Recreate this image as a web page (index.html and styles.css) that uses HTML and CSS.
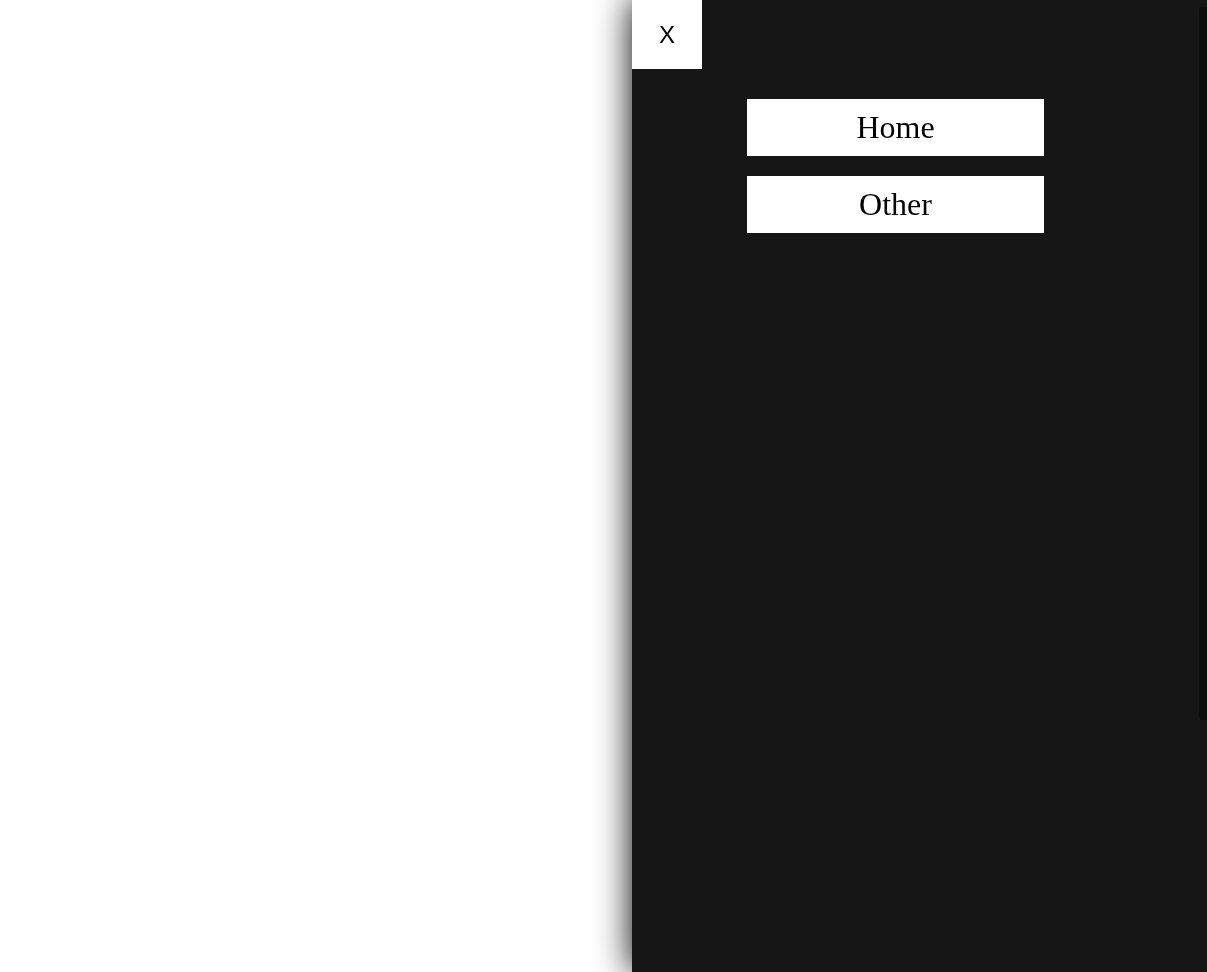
FILE: index.html
```html
<!DOCTYPE html>
<html>
<head>
<meta charset="utf-8">
<link rel="stylesheet" href="styles.css">
</head>
<body>
<div class="page"></div>
<aside class="drawer">
  <button class="close">X</button>
  <nav class="menu">
    <a class="item">Home</a>
    <a class="item">Other</a>
  </nav>
  <div class="thumb"></div>
</aside>
</body>
</html>
```
FILE: styles.css
```css
html, body {
  margin: 0;
  padding: 0;
  height: 100%;
  background: #ffffff;
  overflow: hidden;
}
.drawer {
  position: fixed;
  top: 0;
  right: 0;
  width: 575px;
  height: 100%;
  background: #161616;
  box-shadow: 0 0 34px rgba(0, 0, 0, 1);
  display: flex;
  flex-direction: column;
}
.close {
  width: 70px;
  height: 69px;
  border: none;
  background: #ffffff;
  font-family: "Liberation Sans", Arial, sans-serif;
  font-size: 24px;
  color: #000;
  padding: 0;
  margin: 0;
}
.menu {
  display: flex;
  flex-direction: column;
  gap: 20px;
  padding: 30px 0 0 115px;
}
.item {
  width: 297px;
  height: 57px;
  background: #ffffff;
  color: #000;
  font-family: "Liberation Serif", "Times New Roman", serif;
  font-size: 32px;
  display: flex;
  align-items: center;
  justify-content: center;
}
.thumb {
  position: absolute;
  top: 7px;
  right: 0;
  width: 8px;
  height: 713px;
  background: #0a0d08;
  border-radius: 4px 0 0 4px;
}
```
